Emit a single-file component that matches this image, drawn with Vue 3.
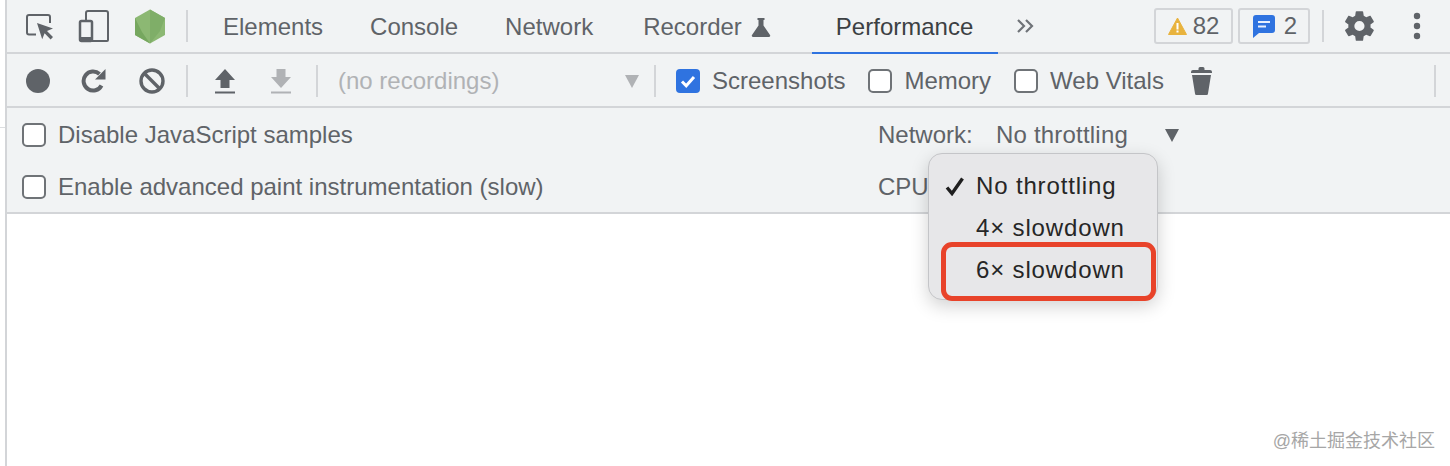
<template>
  <div class="page">
    <div class="edge"><div class="edge__line"></div></div>

    <div class="panel">
      <div class="bar bar--tabs">
        <svg class="icon icon--inspect" width="30" height="30" viewBox="0 0 30 30">
          <path d="M11 23.500H4a2 2 0 0 1-2-2V6a2 2 0 0 1 2-2h19a2 2 0 0 1 2 2v6" fill="none" stroke="#5f6368" stroke-width="2"/>
          <path d="M12 12l16 5.500-6 2.400 6 6.200-2.400 2.400-6-6.200-2.400 6z" fill="#5f6368"/>
        </svg>
        <svg class="icon icon--device" width="32" height="34" viewBox="0 0 32 34">
          <path d="M8 11V4a2 2 0 0 1 2-2h18a2 2 0 0 1 2 2v27a1 1 0 0 1-1 1H14" fill="none" stroke="#5f6368" stroke-width="2"/>
          <rect x="2" y="12" width="12" height="20" rx="1.500" fill="none" stroke="#5f6368" stroke-width="2.500"/>
          <rect x="2" y="28" width="12" height="4" fill="#5f6368"/>
        </svg>
        <svg class="icon icon--node" width="32" height="35" viewBox="0 0 32 35">
          <path d="M16 0.500L31 9v17l-15 8.500L1 26V9z" fill="#8cb873"/>
          <path d="M16 0.500L31 9 26 22 16 34.500z" fill="#7fae68"/>
          <path d="M1 9l7 14 8 11.500L1 26z" fill="#76a75f"/>
        </svg>
        <span class="divider divider--head"></span>

        <span v-for="tab in tabs" :key="tab.name" class="tab" :class="{ 'tab--active': tab.active, 'tab--flask': tab.flask }">
          {{ tab.name }}
          <svg v-if="tab.flask" class="flask" width="20" height="20" viewBox="0 0 20 20">
            <path d="M6.500 1h7v2h-1v5.500L19 18a1.300 1.300 0 0 1-1 2H2a1.300 1.300 0 0 1-1-2l6.500-9.500V3h-1z" fill="#5f6368"/>
          </svg>
        </span>

        <svg class="icon icon--more" width="20" height="16" viewBox="0 0 20 16">
          <path d="M2 2l6 6-6 6M10 2l6 6-6 6" fill="none" stroke="#6f7378" stroke-width="2.200"/>
        </svg>

        <div class="badge badge--warn">
          <svg width="19" height="18" viewBox="0 0 19 18">
            <path d="M9.500 1L18.500 17.500H.5z" fill="#e8b33e" stroke="#e8b33e" stroke-width="1" stroke-linejoin="round"/>
            <rect x="8.500" y="6" width="2" height="6.500" fill="#fff"/>
            <rect x="8.500" y="13.500" width="2" height="2" fill="#fff"/>
          </svg>
          <span>82</span>
        </div>
        <div class="badge badge--info">
          <svg width="22" height="23" viewBox="0 0 22 23">
            <path d="M3 0h16a3 3 0 0 1 3 3v12a3 3 0 0 1-3 3H6l-6 5V3a3 3 0 0 1 3-3z" fill="#2f73e0"/>
            <rect x="5" y="6" width="12" height="2" fill="#e8f0fe"/>
            <rect x="5" y="10.500" width="8" height="2" fill="#e8f0fe"/>
          </svg>
          <span>2</span>
        </div>
        <span class="divider divider--tail"></span>

        <svg class="icon icon--gear" width="34" height="34" viewBox="0 0 24 24">
          <path d="M19.400 13c.04-.33.060-.66.060-1s-.02-.67-.060-1l2.200-1.700c.2-.15.250-.43.120-.66l-2.100-3.600c-.13-.23-.4-.31-.63-.23l-2.600 1.050c-.54-.41-1.120-.76-1.760-1.020L14.200 2c-.04-.24-.25-.42-.5-.42h-4.200c-.25 0-.46.18-.5.420l-.4 2.840c-.64.260-1.220.61-1.760 1.020L4.240 4.810c-.23-.08-.5 0-.63.230l-2.100 3.600c-.13.230-.08.510.12.660L3.830 11c-.04.33-.07.67-.07 1s.03.67.07 1l-2.200 1.700c-.2.15-.25.43-.12.66l2.100 3.600c.13.230.4.310.63.230l2.600-1.050c.54.41 1.120.76 1.760 1.020l.4 2.840c.04.240.25.420.5.420h4.200c.25 0 .46-.18.5-.42l.4-2.840c.64-.26 1.220-.61 1.760-1.020l2.600 1.050c.23.080.5 0 .63-.23l2.100-3.600c.13-.23.08-.51-.12-.66zM11.600 15.600a3.600 3.600 0 1 1 0-7.200 3.600 3.600 0 0 1 0 7.200z" fill="#5f6368"/>
        </svg>
        <svg class="icon icon--dots" width="8" height="28" viewBox="0 0 8 28">
          <circle cx="4" cy="4" r="3.200" fill="#5f6368"/>
          <circle cx="4" cy="14" r="3.200" fill="#5f6368"/>
          <circle cx="4" cy="24" r="3.200" fill="#5f6368"/>
        </svg>
      </div>

      <div class="bar bar--tools">
        <span class="record"></span>
        <svg class="icon icon--reload" width="26" height="26" viewBox="0 0 26 26">
          <path d="M20.500 17.500A9.500 9.500 0 1 1 18.500 6" fill="none" stroke="#5f6368" stroke-width="4"/>
          <path d="M24.500 1v10.500H14z" fill="#5f6368"/>
        </svg>
        <svg class="icon icon--block" width="28" height="28" viewBox="0 0 28 28">
          <circle cx="14" cy="14" r="11" fill="none" stroke="#5f6368" stroke-width="3.400"/>
          <path d="M6 6l16 16" stroke="#5f6368" stroke-width="3.400"/>
        </svg>
        <span class="divider divider--a"></span>
        <svg class="icon icon--upload" width="20" height="25" viewBox="0 0 20 25">
          <path d="M10 0l10 11h-5.500v8h-9v-8H0z" fill="#5f6368"/>
          <rect y="22.500" width="20" height="2" fill="#5f6368"/>
        </svg>
        <svg class="icon icon--download" width="20" height="25" viewBox="0 0 20 25">
          <path d="M10 19L0 8h5.500V0h9v8H20z" fill="#b0b2b5"/>
          <rect y="22.500" width="20" height="2" fill="#b0b2b5"/>
        </svg>
        <span class="divider divider--b"></span>
        <span class="recordings">(no recordings)</span>
        <span class="arrow arrow--muted"></span>
        <span class="divider divider--c"></span>

        <label class="check check--on">
          <svg width="24" height="24" viewBox="0 0 24 24">
            <rect width="24" height="24" rx="4" fill="#2f73e0"/>
            <path d="M6 12.500l4.200 4.200L18 8" fill="none" stroke="#fff" stroke-width="3"/>
          </svg>
          Screenshots
        </label>
        <label class="check check--memory"><span class="box"></span>Memory</label>
        <label class="check check--vitals"><span class="box"></span>Web Vitals</label>
        <svg class="icon icon--trash" width="21" height="28" viewBox="0 0 21 28">
          <path d="M7.500 1.500A1.500 1.500 0 0 1 9 0h3a1.500 1.500 0 0 1 1.500 1.500V3H19a2 2 0 0 1 2 2v1H0V5a2 2 0 0 1 2-2h5.500z" fill="#5f6368"/>
          <path d="M1 8h19l-3 18.500a1.500 1.500 0 0 1-1.500 1.500h-10A1.500 1.500 0 0 1 4 26.500z" fill="#5f6368"/>
        </svg>
        <span class="divider divider--d"></span>
      </div>

      <div class="settings">
        <div class="settings__row">
          <label class="check check--wide"><span class="box"></span>Disable JavaScript samples</label>
          <span class="field">Network:</span>
          <span class="field__value">No throttling</span>
          <span class="arrow"></span>
        </div>
        <div class="settings__row">
          <label class="check check--wide"><span class="box"></span>Enable advanced paint instrumentation (slow)</label>
          <span class="field">CPU:</span>
        </div>

        <ul class="menu">
          <li v-for="item in menuItems" :key="item.label" class="menu__item" :class="{ 'menu__item--marked': item.marked }">
            <svg v-if="item.checked" class="menu__tick" width="20" height="20" viewBox="0 0 20 20">
              <path d="M2 11.500l5 6L17.500 2.500" fill="none" stroke="#1f1f1f" stroke-width="3.400"/>
            </svg>
            {{ item.label }}
          </li>
        </ul>
      </div>

      <div class="canvas">
        <span class="watermark">@稀土掘金技术社区</span>
      </div>
    </div>
  </div>
</template>

<script setup>
const tabs = [
  { name: 'Elements' },
  { name: 'Console' },
  { name: 'Network' },
  { name: 'Recorder', flask: true },
  { name: 'Performance', active: true },
]

const menuItems = [
  { label: 'No throttling', checked: true },
  { label: '4× slowdown' },
  { label: '6× slowdown', marked: true },
]
</script>

<style>
html, body {
  background: #fff;
  overflow: hidden;
}
</style>

<style scoped>
.page {
  display: flex;
  width: 1450px;
  height: 466px;
  font-family: "Liberation Sans", Arial, sans-serif;
  color: #5f6368;
  overflow: hidden;
}

.edge {
  width: 5px;
  flex: none;
  padding-top: 127px;
}

.edge__line {
  height: 1px;
  background: #dcdee0;
}

.panel {
  flex: 1;
  display: flex;
  flex-direction: column;
  border-left: 2px solid #d3d5d8;
}

.bar {
  display: flex;
  align-items: center;
  box-sizing: border-box;
  height: 54px;
  background: #f1f3f4;
  font-size: 24px;
  border-bottom: 2px solid #d3d5d8;
}

.bar--tools {
  padding-top: 2px;
}

.icon {
  flex: none;
}

.icon--inspect { margin-left: 18px; }
.icon--device { margin-left: 23px; }
.icon--node { margin-left: 24px; }
.icon--more { margin-left: 18px; }
.icon--gear { margin-left: 19px; }
.icon--dots { margin-left: 36px; }
.icon--reload { margin-left: 31px; }
.icon--block { margin-left: 31px; }
.icon--upload { margin-left: 27px; }
.icon--download { margin-left: 36px; }
.icon--trash { margin-left: 27px; }

.divider {
  flex: none;
  width: 2px;
  height: 32px;
  background: #d3d5d8;
}

.divider--head { margin-left: 20px; margin-right: 11.5px; }
.divider--tail { margin-left: 12px; }
.divider--a { margin-left: 20px; }
.divider--b { margin-left: 25px; }
.divider--c { margin-left: 15px; }
.divider--d { margin-left: 222px; }

.tab {
  flex: none;
  display: flex;
  align-items: center;
  align-self: stretch;
  padding: 1px 23.5px 0;
  margin-bottom: -2px;
  border-bottom: 2px solid transparent;
}

.tab--flask {
  margin-left: 3px;
  margin-right: 18px;
}

.tab--active {
  padding-right: 24.5px;
  color: #3c4043;
  border-bottom-color: #2f73e0;
}

.flask {
  margin-left: 9px;
}

.badge {
  flex: none;
  display: flex;
  align-items: center;
  height: 36px;
  box-sizing: border-box;
  border: 2px solid #d3d5d8;
  border-radius: 3px;
}

.badge--warn {
  width: 79px;
  margin-left: 118px;
  padding-left: 12px;
  gap: 6px;
}

.badge--info {
  width: 72px;
  margin-left: 5px;
  padding-left: 13px;
  gap: 9px;
}

.record {
  flex: none;
  width: 24px;
  height: 24px;
  margin-left: 19px;
  border-radius: 50%;
  background: #5f6368;
}

.recordings {
  flex: none;
  width: 287px;
  margin-left: 20px;
  color: #b0b2b5;
}

.arrow {
  flex: none;
  width: 0;
  height: 0;
  border-left: 7.5px solid transparent;
  border-right: 7.5px solid transparent;
  border-top: 13px solid #5f6368;
}

.arrow--muted {
  border-top-color: #b0b2b5;
}

.check {
  flex: none;
  display: flex;
  align-items: center;
  gap: 12px;
}

.check--on { margin-left: 20px; }
.check--memory { margin-left: 23px; }
.check--vitals { margin-left: 23px; }

.box {
  flex: none;
  width: 24px;
  height: 24px;
  box-sizing: border-box;
  background: #fff;
  border: 2px solid #6f7377;
  border-radius: 5px;
}

.settings {
  position: relative;
  padding: 1px 0 0 15px;
  height: 106px;
  box-sizing: border-box;
  background: #f1f3f4;
  border-bottom: 2px solid #d3d5d8;
  font-size: 24px;
}

.settings__row {
  display: flex;
  align-items: center;
  height: 52px;
}

.check--wide {
  width: 856px;
}

.field {
  flex: none;
  width: 118px;
}

.field__value {
  flex: none;
  width: 169px;
  letter-spacing: 0.2px;
}

.menu {
  position: absolute;
  z-index: 2;
  left: 921px;
  top: 45px;
  width: 230px;
  height: 147px;
  box-sizing: border-box;
  margin: 0;
  padding: 11px 0 0;
  list-style: none;
  background: #e7e7e9;
  border: 1px solid #c4c5c8;
  border-radius: 14px;
  box-shadow: 0 6px 18px rgba(0, 0, 0, 0.18);
  color: #262626;
}

.menu__item {
  position: relative;
  height: 42px;
  line-height: 42px;
  padding-left: 47px;
  letter-spacing: 0.85px;
}

.menu__tick {
  position: absolute;
  left: 16px;
  top: 11px;
}

.menu__item--marked::after {
  content: "";
  position: absolute;
  left: 12px;
  right: 1px;
  top: -7px;
  height: 59px;
  box-sizing: border-box;
  border: 5px solid #e8432a;
  border-radius: 11px;
}

.canvas {
  position: relative;
  flex: 1;
  background: #fff;
}

.watermark {
  position: absolute;
  right: 15px;
  bottom: 14px;
  font-family: "Liberation Sans", "Noto Sans CJK SC", sans-serif;
  font-size: 18px;
  color: #a6a6a6;
}
</style>
